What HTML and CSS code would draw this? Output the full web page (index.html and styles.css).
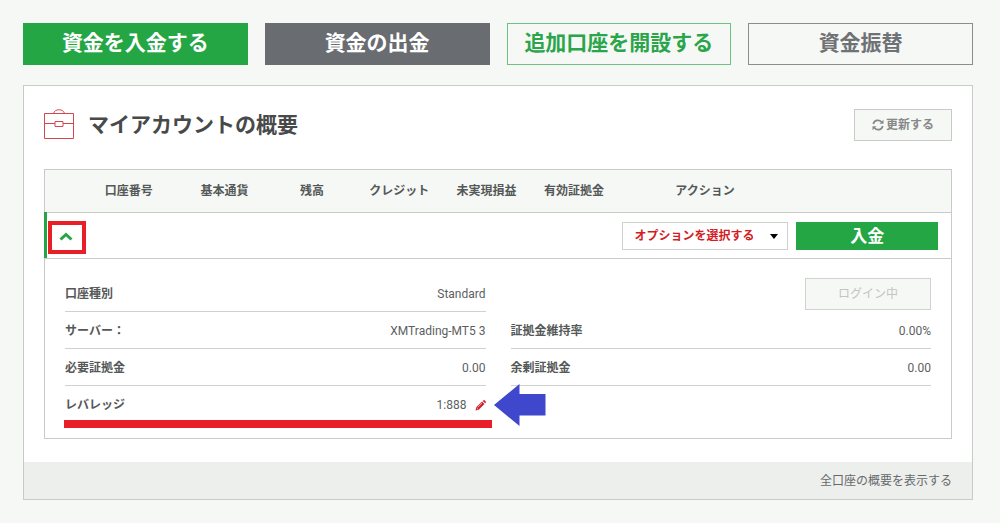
FILE: index.html
```html
<!DOCTYPE html>
<html lang="ja">
<head>
<meta charset="utf-8">
<title>マイアカウントの概要</title>
<link rel="stylesheet" href="styles.css">
</head>
<body>
<nav class="actions">
  <a class="action action-green" href="#">資金を入金する</a>
  <a class="action action-gray" href="#">資金の出金</a>
  <a class="action action-outline-green" href="#">追加口座を開設する</a>
  <a class="action action-outline-gray" href="#">資金振替</a>
</nav>
<main class="card">
  <div class="card-body">
    <header class="card-head">
      <svg class="briefcase" width="32" height="32" viewBox="0 0 32 32" fill="none" stroke="#d5474f" aria-hidden="true">
        <path d="M.5 4.500h29v25h-29zM.5 14.500h10.500M19 14.500h10.500M11 12.500h8v5h-8zM9.500 4.500c1-5 10-5 11 0"/>
      </svg>
      <h1 class="title">マイアカウントの概要</h1>
      <button class="refresh" type="button">
        <svg width="12" height="12" viewBox="0 0 12 12" fill="none" stroke="currentColor" stroke-width="1.700" aria-hidden="true">
          <path d="M1.300 5A4.700 4.700 0 0 1 9.500 3M10.700 7A4.700 4.700 0 0 1 2.500 9"/>
          <path d="M11.500.8v4h-4zM.5 11.200v-4h4z" fill="currentColor" stroke="none"/>
        </svg>
        更新する
      </button>
    </header>
    <table class="accounts">
      <colgroup>
        <col class="col-toggle"><col class="col-number"><col class="col-data"><col class="col-data"><col class="col-data"><col class="col-data"><col class="col-data"><col class="col-option"><col class="col-deposit">
      </colgroup>
      <thead>
        <tr>
          <td></td>
          <th scope="col">口座番号</th>
          <th scope="col">基本通貨</th>
          <th scope="col">残高</th>
          <th scope="col">クレジット</th>
          <th scope="col">未実現損益</th>
          <th scope="col">有効証拠金</th>
          <th scope="col">アクション</th>
          <td></td>
        </tr>
      </thead>
      <tbody>
        <tr class="account-row">
          <td class="toggle-cell">
            <button class="toggle" type="button" aria-label="詳細を閉じる" aria-expanded="true">
              <svg width="14" height="9" viewBox="0 0 14 9" fill="none" stroke="#25a645" stroke-width="3" aria-hidden="true"><path d="M1.500 7.500 7 2.500l5.500 5"/></svg>
            </button>
          </td>
          <td></td><td></td><td></td><td></td><td></td><td></td>
          <td class="option-cell">
            <div class="select-wrap">
              <select class="option-select" aria-label="オプション"><option>オプションを選択する</option></select>
              <svg class="caret" width="8" height="5" viewBox="0 0 8 5" aria-hidden="true"><path d="M0 0h8L4 5z"/></svg>
            </div>
          </td>
          <td class="deposit-cell"><button class="deposit" type="button">入金</button></td>
        </tr>
        <tr>
          <td colspan="9">
            <div class="details">
              <dl class="list">
                <div class="item"><dt>口座種別</dt><dd>Standard</dd></div>
                <div class="item"><dt>サーバー：</dt><dd>XMTrading-MT5 3</dd></div>
                <div class="item"><dt>必要証拠金</dt><dd>0.00</dd></div>
                <div class="item leverage">
                  <dt>レバレッジ</dt>
                  <dd>1:888
                    <button class="edit" type="button" aria-label="レバレッジを変更">
                      <svg width="11" height="11" viewBox="0 0 11 11" aria-hidden="true"><path d="M.5 10.500 1.200 7.300 7 1.500l2.500 2.500-5.800 5.800zM7.700.9 8.500.2q.5-.4 1 0l1.300 1.300q.4.500 0 1l-.7.800z" fill="#d2202f"/><path d="M2.700 7.200 7 2.900M1.600 8l1.400 1.400" stroke="#fff" stroke-width=".6"/></svg>
                    </button>
                  </dd>
                  <svg class="pointer" width="52" height="42" viewBox="0 0 52 42" aria-hidden="true"><path d="M0 21 25.500 0v10H51.500v21.500h-26V42z" fill="#3f48cc"/></svg>
                </div>
              </dl>
              <div>
                <div class="login-row"><button class="login" type="button" disabled>ログイン中</button></div>
                <dl class="list">
                  <div class="item"><dt>証拠金維持率</dt><dd>0.00%</dd></div>
                  <div class="item"><dt>余剰証拠金</dt><dd>0.00</dd></div>
                </dl>
              </div>
            </div>
          </td>
        </tr>
      </tbody>
    </table>
  </div>
  <footer class="card-foot"><a class="all-link" href="#">全口座の概要を表示する</a></footer>
</main>
</body>
</html>
```
FILE: styles.css
```css
* { box-sizing: border-box; }

body {
  margin: 0;
  padding: 23px 27px 23px 23px;
  background: #f6f8f6;
  color: #484a4a;
  font: 12px/18px Roboto, "Noto Sans CJK JP", sans-serif;
}

button, select { font: inherit; border-radius: 0; margin: 0; }
a { text-decoration: none; }

.actions {
  display: grid;
  grid-template-columns: repeat(4, 1fr);
  gap: 17px;
  margin-bottom: 20px;
}

.action {
  border: 1px solid;
  padding: 3px 0 5px;
  font-size: 21px;
  line-height: 32px;
  font-weight: 700;
  text-align: center;
}

.action-green { background: #25a645; border-color: #25a645; color: #fff; }
.action-gray { background: #696c70; border-color: #696c70; color: #fff; }
.action-outline-green { border-color: #6cc281; color: #2aa54a; }
.action-outline-gray { border-color: #8c8e8e; color: #6f7274; }

.card { background: #fff; border: 1px solid #c9cbc9; }
.card-body { padding: 23px 20px; }

.card-head {
  display: flex;
  align-items: center;
  margin-bottom: 28px;
}

.briefcase { margin-right: 12px; }

.title {
  margin: 0;
  flex: 1;
  font-size: 21px;
  line-height: 32px;
  font-weight: 700;
}

.refresh {
  display: flex;
  align-items: center;
  gap: 2px;
  height: 32px;
  padding: 0 17px;
  background: #f6f8f6;
  border: 1px solid #c9cbc9;
  color: #868987;
  font-weight: 700;
}

.accounts {
  width: 100%;
  table-layout: fixed;
  border: 1px solid #c9cbc9;
  border-spacing: 0;
}

.accounts td, .accounts th { padding: 0; }
.accounts thead td, .accounts th {
  height: 43px;
  background: #f6f8f6;
  border-bottom: 1px solid #c9cbc9;
  color: #555858;
  font-weight: 700;
}

.col-toggle { width: 3.5%; }
.col-number { width: 11.5%; }
.col-option { width: 19.3%; }
.col-deposit { width: 17.5%; }

.account-row td { height: 46px; border-bottom: 1px solid #c9cbc9; }

.toggle-cell { position: relative; }
.toggle-cell::before {
  content: "";
  position: absolute;
  inset: -1px auto 0 -1px;
  width: 3px;
  background: #25a645;
}

.toggle {
  position: absolute;
  top: 8px;
  left: 3px;
  width: 38px;
  height: 33px;
  padding: 0 2px 3px 0;
  display: flex;
  align-items: center;
  justify-content: center;
  background: #fff;
  border: 4px solid #e81f27;
}

.select-wrap { position: relative; margin: 0 4px; }

.option-select {
  appearance: none;
  display: block;
  width: 100%;
  height: 28px;
  padding: 0 12px;
  background: #fff;
  border: 1px solid #d0d2d0;
  color: #d41c24;
  font-weight: 700;
}

.caret { position: absolute; right: 10px; top: 12px; pointer-events: none; }

.accounts .deposit-cell { padding: 0 13px 0 4px; }

.deposit {
  display: block;
  width: 100%;
  height: 28px;
  padding: 0;
  background: #25a645;
  border: 0;
  color: #fff;
  font-size: 17px;
  line-height: 28px;
  font-weight: 700;
}

.details {
  display: grid;
  grid-template-columns: 1fr 1fr;
  gap: 25px;
  padding: 16px 20px;
}

.list { margin: 0; }

.item {
  display: flex;
  justify-content: space-between;
  padding: 10px 0 8px;
  border-bottom: 1px solid #d0d2d0;
}

.item dt { color: #555858; font-weight: 700; }
.item dd { margin: 0; color: #5c5f5f; }

.leverage { position: relative; border-bottom: 0; }
.leverage dd { display: flex; align-items: center; gap: 8px; }
.leverage::after {
  content: "";
  position: absolute;
  left: -1px;
  right: -6px;
  bottom: -6px;
  height: 8px;
  background: #e81f27;
}

.edit { display: flex; padding: 0; border: 0; background: none; }
.pointer { position: absolute; left: calc(100% + 8px); top: -2px; }

.login-row { height: 37px; padding-top: 3px; text-align: right; }

.login {
  width: 30%;
  height: 32px;
  padding: 0;
  background: #f6f8f6;
  border: 1px solid #d0d2d0;
  color: #c2c5c3;
}

.card-foot {
  padding: 10px 20px 9px;
  background: #edefed;
  text-align: right;
}

.all-link { color: #66696a; }
```
